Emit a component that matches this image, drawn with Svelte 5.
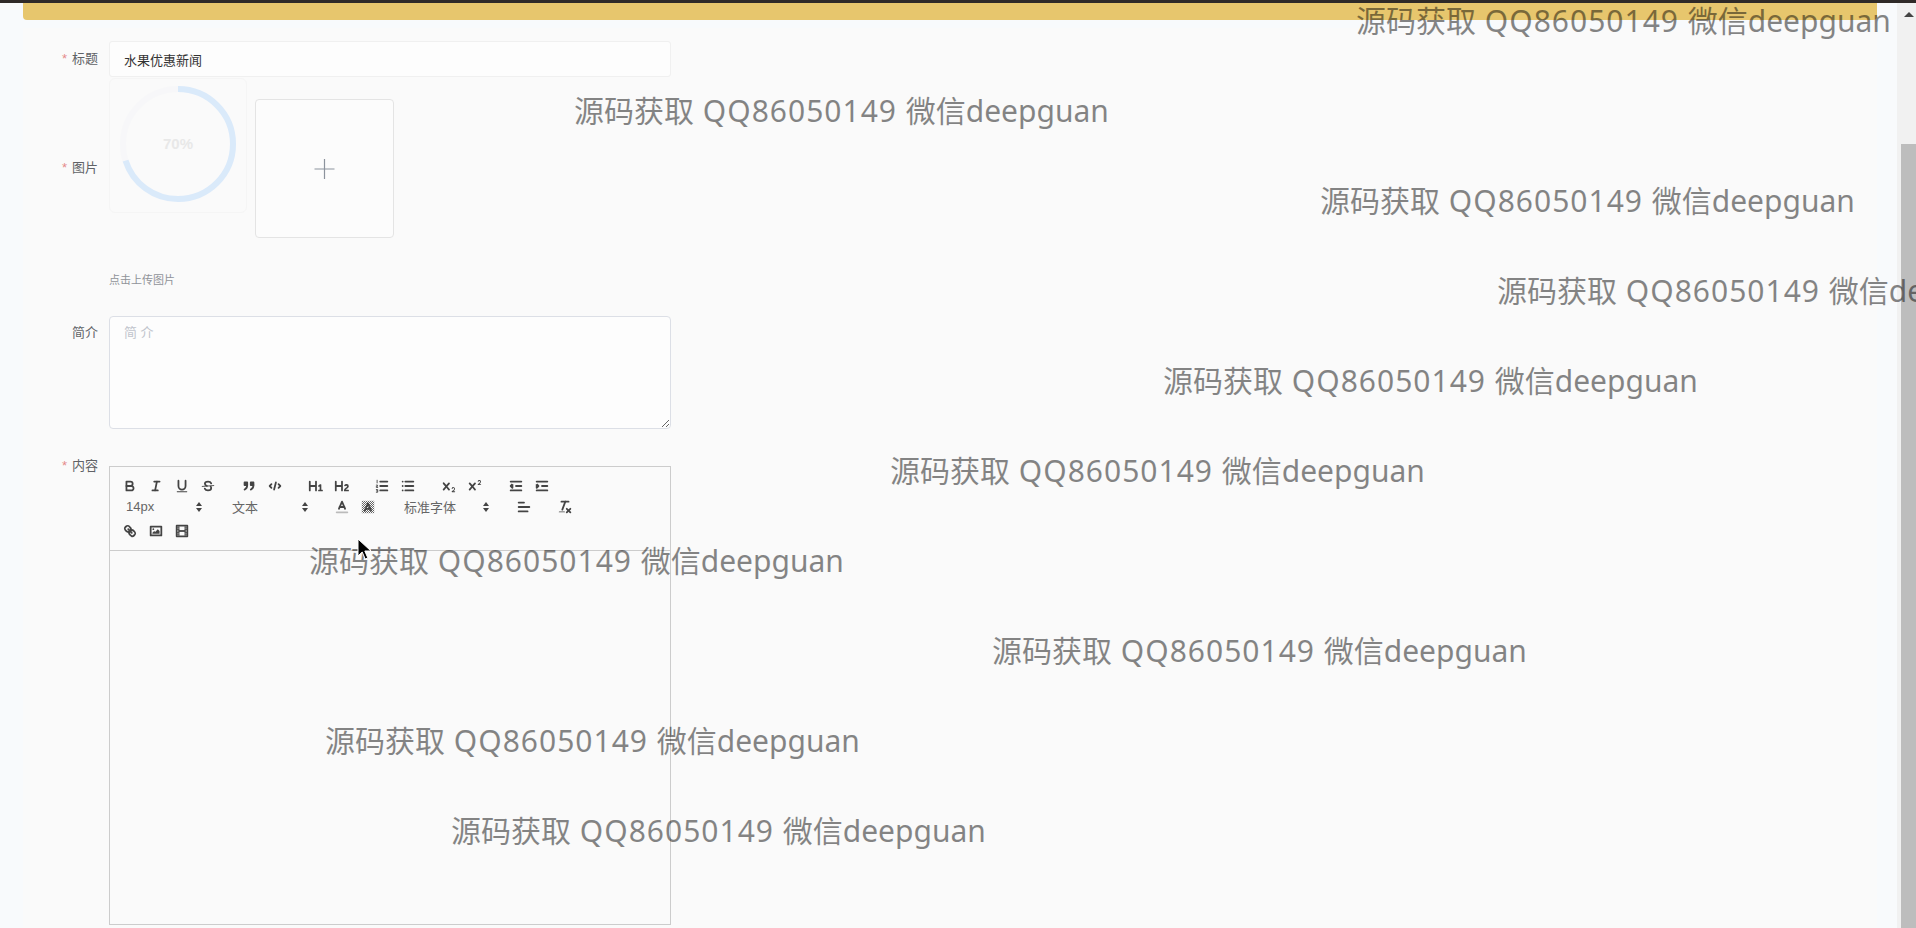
<script>
  // watermark lines repeat every 90px down the page, only x changes
  const marks = [1356, 574, 1320, 1497, 1163, 890, 309, 992, 325, 451];
</script>

<div class="page">
  <div class="topline"></div>
  <div class="shell">
    <main class="main">
      <div class="banner"></div>
      <form class="form">
        <div class="row row-title">
          <span class="label required">标题</span>
          <input class="input" value="水果优惠新闻" />
        </div>

        <div class="row row-image">
          <span class="label required">图片</span>
          <div class="upload">
            <div class="upload-card">
              <svg class="ring" width="126" height="126" viewBox="0 0 126 126">
                <circle cx="63" cy="63" r="55" fill="none" stroke="#ebeef5" stroke-width="6" />
                <circle
                  cx="63"
                  cy="63"
                  r="55"
                  fill="none"
                  stroke="#409eff"
                  stroke-width="6"
                  stroke-dasharray="241.9 345.6"
                  transform="rotate(-90 63 63)"
                />
              </svg>
              <span class="ring-text">70%</span>
            </div>
            <div class="upload-add">
              <svg width="22" height="22" viewBox="0 0 22 22">
                <path d="M10.5 1v20M.5 11h20" stroke="#8c939d" stroke-width="1.2" fill="none" />
              </svg>
            </div>
          </div>
        </div>
        <div class="hint">点击上传图片</div>

        <div class="row row-brief">
          <span class="label">简介</span>
          <textarea class="textarea" placeholder="简 介"></textarea>
        </div>

        <div class="row row-content">
          <span class="label required">内容</span>
          <div class="editor">
            <div class="toolbar">
              <div class="tb-row">
                <div class="group">
                  <button type="button" class="tb"><svg viewBox="0 0 18 18"><path class="s" d="M5,4H9.5A2.5,2.5,0,0,1,12,6.5v0A2.5,2.5,0,0,1,9.5,9H5V4Z" /><path class="s" d="M5,9h5.5A2.5,2.5,0,0,1,13,11.5v0A2.5,2.5,0,0,1,10.5,14H5V9Z" /></svg></button>
                  <button type="button" class="tb"><svg viewBox="0 0 18 18"><line class="s" x1="7" x2="13" y1="4" y2="4" /><line class="s" x1="5" x2="11" y1="14" y2="14" /><line class="s" x1="8" x2="10" y1="14" y2="4" /></svg></button>
                  <button type="button" class="tb"><svg viewBox="0 0 18 18"><path class="s" d="M5,3V9a4.012,4.012,0,0,0,4,4H9a4.012,4.012,0,0,0,4-4V3" /><rect class="f" height="1" rx="0.5" ry="0.5" width="12" x="3" y="15" /></svg></button>
                  <button type="button" class="tb"><svg viewBox="0 0 18 18"><line class="s thin" x1="15.5" x2="2.5" y1="8.5" y2="9.5" /><path class="s" d="M12.6,6C12,4.6,10.7,4,9.1,4,7,4,5.5,5,5.5,6.6c0,1.2.8,1.9,2.2,2.3M5.4,12c.6,1.4,1.9,2,3.6,2,2.1,0,3.6-1,3.6-2.7,0-.7-.2-1.2-.6-1.6" /></svg></button>
                </div>
                <div class="group">
                  <button type="button" class="tb"><svg viewBox="0 0 18 18"><rect class="fs" height="3" width="3" x="4" y="5" /><rect class="fs" height="3" width="3" x="11" y="5" /><path class="s fn" d="M7,8c0,4.031-3,5-3,5" /><path class="s fn" d="M14,8c0,4.031-3,5-3,5" /></svg></button>
                  <button type="button" class="tb"><svg viewBox="0 0 18 18"><polyline class="s" points="5 7 3 9 5 11" /><polyline class="s" points="13 7 15 9 13 11" /><line class="s" x1="10" x2="8" y1="5" y2="13" /></svg></button>
                </div>
                <div class="group">
                  <button type="button" class="tb"><svg viewBox="0 0 18 18"><path class="f" d="M10,4V14a1,1,0,0,1-2,0V10H3v4a1,1,0,0,1-2,0V4A1,1,0,0,1,3,4V8H8V4a1,1,0,0,1,2,0Zm6.06787,9.209H14.98975V7.59863a.54085.54085,0,0,0-.605-.60547h-.62744a1.01119,1.01119,0,0,0-.748.29688L11.645,8.56641a.5435.5435,0,0,0-.022.8584l.28613.30762a.53861.53861,0,0,0,.84717.0332l.09912-.08789a1.2137,1.2137,0,0,0,.2417-.35254h.02246s-.01123.30859-.01123.60547V13.209H12.041a.54085.54085,0,0,0-.605.60547v.43945a.54085.54085,0,0,0,.605.60547h4.02686a.54085.54085,0,0,0,.605-.60547v-.43945A.54085.54085,0,0,0,16.06787,13.209Z" /></svg></button>
                  <button type="button" class="tb"><svg viewBox="0 0 18 18"><path class="f" d="M16.73975,13.81445v.43945a.54085.54085,0,0,1-.605.60547H11.855a.58392.58392,0,0,1-.64893-.60547V14.0127c0-2.90527,3.39941-3.42187,3.39941-4.55469a.77675.77675,0,0,0-.84717-.78125,1.17684,1.17684,0,0,0-.83594.38477c-.2749.26367-.561.374-.85791.13184l-.4292-.34082c-.30811-.24219-.38525-.51758-.1543-.81445a2.97155,2.97155,0,0,1,2.45361-1.17676,2.45393,2.45393,0,0,1,2.68408,2.40918c0,2.45312-3.1792,2.92676-3.27832,3.93848h2.79443A.54085.54085,0,0,1,16.73975,13.81445ZM9,3A.99974.99974,0,0,0,8,4V8H3V4A1,1,0,0,0,1,4V14a1,1,0,0,0,2,0V10H8v4a1,1,0,0,0,2,0V4A.99974.99974,0,0,0,9,3Z" /></svg></button>
                </div>
                <div class="group">
                  <button type="button" class="tb"><svg viewBox="0 0 18 18"><line class="s" x1="7" x2="15" y1="4" y2="4" /><line class="s" x1="7" x2="15" y1="9" y2="9" /><line class="s" x1="7" x2="15" y1="14" y2="14" /><path class="s thin" d="M3.5 2.5v3M2.6 8h1.4v1.4H2.6v1.2h1.6M2.6 13h1.6v3H2.6M2.8 14.5h1.2" /></svg></button>
                  <button type="button" class="tb"><svg viewBox="0 0 18 18"><line class="s" x1="6" x2="15" y1="4" y2="4" /><line class="s" x1="6" x2="15" y1="9" y2="9" /><line class="s" x1="6" x2="15" y1="14" y2="14" /><line class="s" x1="3" x2="3" y1="4" y2="4" /><line class="s" x1="3" x2="3" y1="9" y2="9" /><line class="s" x1="3" x2="3" y1="14" y2="14" /></svg></button>
                </div>
                <div class="group">
                  <button type="button" class="tb"><svg viewBox="0 0 18 18"><path class="f" d="M15.5,15H13.861a3.858,3.858,0,0,0,1.914-2.975,1.8,1.8,0,0,0-1.6-1.751A1.921,1.921,0,0,0,12.021,11.7a0.50013,0.50013,0,1,0,.957.291h0a0.914,0.914,0,0,1,1.053-.725,0.81,0.81,0,0,1,.744.762c0,1.076-1.16971,1.86982-1.93971,2.43082A1.45639,1.45639,0,0,0,12,15.5a0.5,0.5,0,0,0,.5.5h3A0.5,0.5,0,0,0,15.5,15Z" /><path class="f" d="M9.65,5.241a1,1,0,0,0-1.409.108L6,7.964,3.759,5.349A1,1,0,0,0,2.192,6.59178Q2.2,6.6,2.241,6.651L4.684,9.5,2.241,12.35A1,1,0,0,0,3.71,13.70722q0.04-.04.049-0.05278L6,11.036l2.241,2.614a1,1,0,0,0,1.567-1.243Q9.8,12.4,9.759,12.35L7.316,9.5,9.759,6.651A1,1,0,0,0,9.65,5.241Z" /></svg></button>
                  <button type="button" class="tb"><svg viewBox="0 0 18 18"><path class="f" d="M15.5,7H13.861a4.015,4.015,0,0,0,1.914-2.975,1.8,1.8,0,0,0-1.6-1.751A1.922,1.922,0,0,0,12.021,3.7a0.5,0.5,0,1,0,.957.291,0.917,0.917,0,0,1,1.053-.725,0.81,0.81,0,0,1,.744.762c0,1.077-1.164,1.925-1.934,2.486A1.423,1.423,0,0,0,12,7.5a0.5,0.5,0,0,0,.5.5h3A0.5,0.5,0,0,0,15.5,7Z" /><path class="f" d="M9.651,5.241a1,1,0,0,0-1.41.108L6,7.964,3.759,5.349A1,1,0,1,0,2.241,6.651L4.684,9.5,2.241,12.35A1,1,0,1,0,3.759,13.65L6,11.036l2.241,2.614a1,1,0,0,0,1.518-1.3L7.316,9.5,9.759,6.651A1,1,0,0,0,9.651,5.241Z" /></svg></button>
                </div>
                <div class="group">
                  <button type="button" class="tb"><svg viewBox="0 0 18 18"><line class="s" x1="3" x2="15" y1="14" y2="14" /><line class="s" x1="3" x2="15" y1="4" y2="4" /><line class="s" x1="9" x2="15" y1="9" y2="9" /><polyline class="fs" points="5 7 5 11 3 9 5 7" /></svg></button>
                  <button type="button" class="tb"><svg viewBox="0 0 18 18"><line class="s" x1="3" x2="15" y1="14" y2="14" /><line class="s" x1="3" x2="15" y1="4" y2="4" /><line class="s" x1="9" x2="15" y1="9" y2="9" /><polyline class="fs" points="3 7 3 11 5 9 3 7" /></svg></button>
                </div>
              </div>

              <div class="tb-row tb-mid">
                <div class="picker size">
                  <span>14px</span>
                  <svg class="arrows" viewBox="0 0 8 12"><path d="M1 5l3-4 3 4zM1 7l3 4 3-4z" /></svg>
                </div>
                <div class="picker heading">
                  <span>文本</span>
                  <svg class="arrows" viewBox="0 0 8 12"><path d="M1 5l3-4 3 4zM1 7l3 4 3-4z" /></svg>
                </div>
                <div class="group colors">
                  <button type="button" class="tb"><svg viewBox="0 0 18 18"><line class="s label-line" x1="3" x2="15" y1="15" y2="15" /><polyline class="s" points="5.5 11 9 3 12.5 11" /><line class="s" x1="11.63" x2="6.38" y1="9" y2="9" /></svg></button>
                  <button type="button" class="tb"><svg viewBox="0 0 18 18"><defs><pattern id="dots" width="2.25" height="2.25" patternUnits="userSpaceOnUse"><rect width="1.125" height="1.125" fill="#666" /><rect x="1.125" y="1.125" width="1.125" height="1.125" fill="#666" /></pattern></defs><rect x="2" y="2" width="14" height="14" fill="url(#dots)" /><polyline class="s" points="5.5 13 9 5 12.5 13" /><line class="s" x1="11.63" x2="6.38" y1="11" y2="11" /></svg></button>
                </div>
                <div class="picker font">
                  <span>标准字体</span>
                  <svg class="arrows" viewBox="0 0 8 12"><path d="M1 5l3-4 3 4zM1 7l3 4 3-4z" /></svg>
                </div>
                <div class="group align">
                  <button type="button" class="tb"><svg viewBox="0 0 18 18"><line class="s" x1="3" x2="15" y1="9" y2="9" /><line class="s" x1="3" x2="13" y1="14" y2="14" /><line class="s" x1="3" x2="9" y1="4" y2="4" /></svg></button>
                </div>
                <div class="group">
                  <button type="button" class="tb"><svg viewBox="0 0 18 18"><line class="s" x1="5" x2="13" y1="3" y2="3" /><line class="s" x1="6" x2="9.35" y1="12" y2="3" /><line class="s" x1="11" x2="15" y1="11" y2="15" /><line class="s" x1="15" x2="11" y1="11" y2="15" /><rect class="f" height="1" rx="0.5" ry="0.5" width="7" x="2" y="14" /></svg></button>
                </div>
              </div>

              <div class="tb-row tb-last">
                <div class="group">
                  <button type="button" class="tb"><svg viewBox="0 0 18 18"><line class="s" x1="7" x2="11" y1="7" y2="11" /><path class="s" d="M8.9,4.577a3.476,3.476,0,0,1,.36,4.679A3.476,3.476,0,0,1,4.577,8.9C3.185,7.5,2.035,6.4,4.217,4.217S7.5,3.185,8.9,4.577Z" /><path class="s" d="M13.423,9.1a3.476,3.476,0,0,0-4.679-.36,3.476,3.476,0,0,0,.36,4.679c1.392,1.392,2.5,2.542,4.679.36S14.815,10.5,13.423,9.1Z" /></svg></button>
                  <button type="button" class="tb"><svg viewBox="0 0 18 18"><rect class="s" height="10" width="12" x="3" y="4" /><circle class="f" cx="6" cy="7" r="1" /><polyline class="f" points="5 12 5 11 7 9 8 10 11 7 13 9 13 12 5 12" /></svg></button>
                  <button type="button" class="tb"><svg viewBox="0 0 18 18"><rect class="s" height="12" width="12" x="3" y="3" /><rect class="f" height="12" width="1" x="5" y="3" /><rect class="f" height="12" width="1" x="12" y="3" /><rect class="f" height="2" width="8" x="5" y="8" /><rect class="f" height="1" width="3" x="3" y="5" /><rect class="f" height="1" width="3" x="3" y="7" /><rect class="f" height="1" width="3" x="3" y="10" /><rect class="f" height="1" width="3" x="3" y="12" /><rect class="f" height="1" width="3" x="12" y="5" /><rect class="f" height="1" width="3" x="12" y="7" /><rect class="f" height="1" width="3" x="12" y="10" /><rect class="f" height="1" width="3" x="12" y="12" /></svg></button>
                </div>
              </div>
            </div>
            <div class="editor-body"></div>
          </div>
        </div>
      </form>
    </main>

    <aside class="scrollbar">
      <svg class="scroll-up" width="10" height="6" viewBox="0 0 10 6"><path d="M5 0l5 5H0z" /></svg>
      <div class="thumb"></div>
    </aside>
  </div>

  {#each marks as x, i}
    <span class="mark" style="left: {x}px; top: {i * 90 - 1}px">源码获取 <span class="qq">QQ86050149</span> 微信deepguan</span>
  {/each}

  <svg class="cursor" width="16" height="24" viewBox="0 0 16 24">
    <path d="M1 1v17l4.2-4 3 7 2.6-1.1-3-6.9H14z" fill="#000" stroke="#fff" stroke-width="1" />
  </svg>
</div>

<style>
  :global(body) {
    margin: 0;
    background: #f8fafc;
  }

  .page {
    position: relative;
    height: 928px;
    overflow: hidden;
    font-family: "Liberation Sans", "Noto Sans CJK SC", sans-serif;
    color: #606266;
  }

  .topline {
    height: 3px;
    background: #2f2a28;
  }

  .shell {
    display: flex;
    height: 925px;
  }

  .main {
    flex: 1;
    min-width: 0;
    padding: 0 20px 0 23px;
  }

  .banner {
    height: 17px;
    background: #e7c66d;
    border-radius: 0 0 4px 4px;
  }

  .form {
    height: 905px;
    margin-top: 8px;
    padding-top: 13px;
    background: #fafafa;
    box-sizing: border-box;
  }

  .row {
    display: flex;
    gap: 11px;
  }

  .label {
    flex: none;
    width: 75px;
    font-size: 13px;
    line-height: 18px;
    text-align: right;
    color: #606266;
  }

  .required::before {
    content: "*";
    margin-right: 5px;
    color: #e58a8a;
  }

  .row-title {
    align-items: center;
  }

  .input {
    box-sizing: border-box;
    width: 562px;
    height: 36px;
    padding: 0 14px;
    border: 1px solid #f0f0f0;
    border-radius: 3px;
    background: #fdfdfd;
    font: 13px "Liberation Sans", "Noto Sans CJK SC", sans-serif;
    color: #333;
    outline: none;
  }

  .row-image {
    align-items: center;
    height: 180px;
    margin-top: 1px;
  }

  .upload {
    display: flex;
    align-items: flex-start;
    gap: 8px;
    height: 100%;
  }

  .upload-card {
    position: relative;
    box-sizing: border-box;
    display: flex;
    justify-content: center;
    width: 138px;
    height: 135px;
    padding-top: 2px;
    border: 1px solid #f5f5f5;
    border-radius: 6px;
  }

  .ring {
    opacity: 0.17;
  }

  .ring-text {
    position: absolute;
    top: 56px;
    left: 0;
    right: 0;
    text-align: center;
    font-size: 15px;
    font-weight: 700;
    color: #e8e8e8;
  }

  .upload-add {
    box-sizing: border-box;
    display: flex;
    align-items: center;
    justify-content: center;
    width: 139px;
    height: 139px;
    margin-top: 21px;
    border: 1px solid #e4e4e4;
    border-radius: 4px;
    background: #fcfcfc;
  }

  .hint {
    margin: 14px 0 0 86px;
    font-size: 11px;
    line-height: 16px;
    color: #909399;
  }

  .row-brief {
    margin-top: 28px;
  }

  .row-brief .label {
    margin-top: 8px;
  }

  .textarea {
    box-sizing: border-box;
    width: 562px;
    height: 113px;
    padding: 5px 14px;
    border: 1px solid #dcdfe6;
    border-radius: 4px;
    background: #fdfdfd;
    font: 13px "Liberation Sans", "Noto Sans CJK SC", sans-serif;
    outline: none;
  }

  .textarea::placeholder {
    color: #c0c4cc;
  }

  .row-content {
    margin-top: 37px;
  }

  .row-content .label {
    margin-top: -9px;
  }

  .editor {
    box-sizing: border-box;
    display: flex;
    flex-direction: column;
    width: 562px;
    height: 459px;
    border: 1px solid #ccc;
  }

  .toolbar {
    box-sizing: border-box;
    height: 84px;
    padding: 7px 7px 0;
    border-bottom: 1px solid #ccc;
  }

  .tb-row {
    display: flex;
    align-items: center;
    height: 23px;
  }

  .tb-mid {
    height: 20px;
  }

  .tb-last {
    height: 28px;
  }

  .group {
    display: flex;
    margin-right: 14.8px;
  }

  .tb {
    display: flex;
    align-items: center;
    justify-content: center;
    width: 26px;
    height: 22px;
    padding: 0;
    border: 0;
    background: none;
  }

  .tb svg {
    width: 16px;
    height: 16px;
  }

  .s {
    fill: none;
    stroke: #444;
    stroke-width: 2;
    stroke-linecap: round;
    stroke-linejoin: round;
  }

  .thin {
    stroke-width: 1;
  }

  .label-line {
    stroke: #bbb;
  }

  .f {
    fill: #444;
  }

  .fs {
    fill: #444;
    stroke: #444;
    stroke-width: 2;
    stroke-linejoin: round;
  }

  .picker {
    display: flex;
    align-items: center;
    justify-content: space-between;
    box-sizing: border-box;
    height: 22px;
    padding: 0 0 0 9px;
    font-size: 13px;
    color: #666;
  }

  .picker span {
    margin-top: -2px;
  }

  .size {
    width: 86px;
    margin-right: 20px;
  }

  .heading {
    width: 86px;
  }

  .colors {
    margin-left: 20px;
    margin-right: 14px;
  }

  .font {
    width: 95px;
    margin-right: 21px;
  }

  .align {
    margin-right: 15px;
  }

  .arrows {
    width: 8px;
    height: 12px;
    fill: #444;
  }

  .editor-body {
    flex: 1;
  }

  .scrollbar {
    flex: none;
    box-sizing: border-box;
    position: relative;
    width: 19px;
    padding: 141px 0 0 4px;
    background: #f1f1f1;
  }

  .scroll-up {
    position: absolute;
    top: 9px;
    right: 2px;
    fill: #444;
  }

  .thumb {
    height: 784px;
    background: #bdbdbd;
  }

  .mark {
    position: absolute;
    font-family: "Noto Sans", "Noto Sans CJK SC", sans-serif;
    font-size: 30px;
    line-height: 44px;
    white-space: nowrap;
    word-spacing: 1px;
    color: #000;
    opacity: 0.47;
  }

  .qq {
    letter-spacing: 1px;
  }

  .cursor {
    position: absolute;
    left: 357px;
    top: 538px;
  }
</style>
